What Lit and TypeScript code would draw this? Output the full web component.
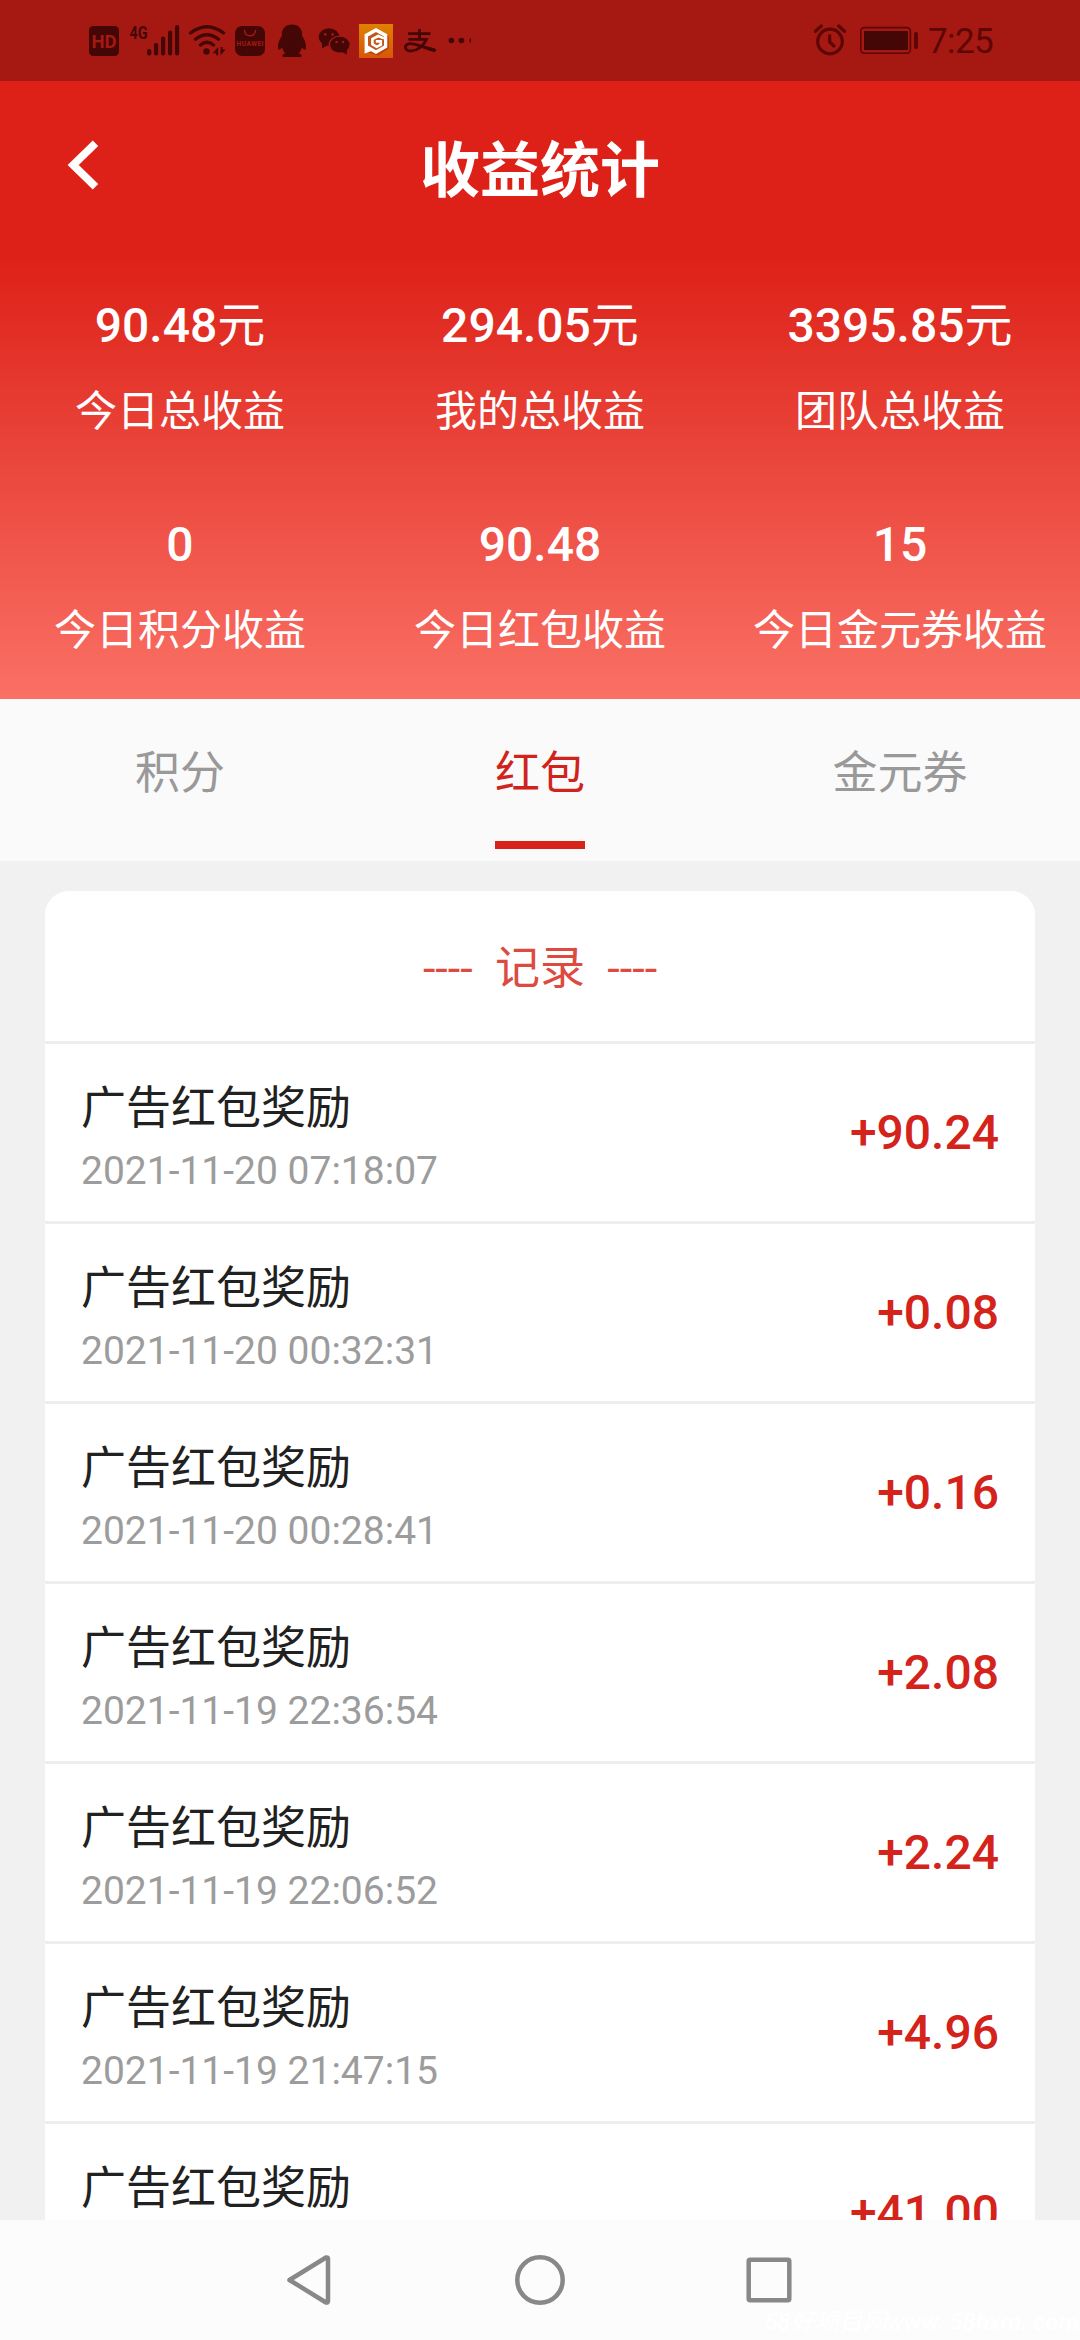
import { LitElement, html, css } from "lit";
import { customElement, property } from "lit/decorators.js";

const FONT = css`Roboto, "Noto Sans CJK SC", sans-serif`;

@customElement("status-bar")
class StatusBar extends LitElement {
  static styles = css`
    :host {
      display: flex;
      justify-content: space-between;
      height: 81px;
      padding: 0 89px 0 88px;
      box-sizing: border-box;
      background: #a51912;
      color: #450706;
      font-family: ${FONT};
    }
    .group { display: flex; }
    svg { display: block; fill: currentColor; font-family: ${FONT}; }
    .line { fill: none; stroke: currentColor; stroke-linecap: round; }
    .cut { fill: #a51912; }
    .cutline { fill: none; stroke: #a51912; stroke-linecap: round; }
    .right { color: #5c0605; }
    .time { font-size: 35px; line-height: 83px; width: 63px; margin-left: 9px; white-space: nowrap; letter-spacing: -0.6px; }
  `;
  render() {
    return html`
      <div class="group">
        <svg width="40" height="81" viewBox="88 0 40 81">
          <rect x="89" y="26" width="30" height="30" rx="4.5"></rect>
          <text class="cut" x="104" y="47.6" font-size="18.5" font-weight="700" text-anchor="middle" textLength="25">HD</text>
        </svg>
        <svg width="58" height="81" viewBox="128 0 58 81">
          <text x="129.5" y="38.6" font-size="19" font-weight="700" textLength="18" lengthAdjust="spacingAndGlyphs">4G</text>
          <rect x="147" y="49" width="4.4" height="6.5" rx="2"></rect>
          <rect x="154" y="43" width="4.2" height="12.5" rx="2"></rect>
          <rect x="161" y="36.5" width="4.2" height="19" rx="2"></rect>
          <rect x="168" y="30.5" width="4.2" height="25" rx="2"></rect>
          <rect x="175" y="25" width="4.2" height="30.5" rx="2"></rect>
        </svg>
        <svg width="48" height="81" viewBox="186 0 48 81">
          <g class="line" stroke-width="3.4">
            <path d="M190.5 33 Q207 20.5 223.5 33"></path>
            <path d="M195.5 39.3 Q207 30 218.5 39.3"></path>
            <path d="M200.5 45 Q207 39.5 213.5 45"></path>
          </g>
          <circle cx="206.5" cy="51.5" r="3.2"></circle>
          <path d="M218.2 47 V55.3 H216.2 V53.2 H212.6 Z M220.6 47 H222.6 V49.6 H225.6 L220.6 55.3 Z"></path>
        </svg>
        <svg width="40" height="81" viewBox="234 0 40 81">
          <rect x="235" y="26" width="30" height="30" rx="7"></rect>
          <path class="cutline" stroke-width="1.4" d="M244.5 30.5 C245 37.5 255 37.5 255.5 30.5"></path>
          <text class="cut" x="250" y="45.6" font-size="6.6" font-weight="700" text-anchor="middle" textLength="27">HUAWEI</text>
        </svg>
        <svg width="40" height="81" viewBox="274 0 40 81">
          <path d="M292 24.5 C285 24.5 281.5 29 281.8 36 C279 40 277.3 44.5 278.2 49.5 C279.5 50.5 281 48.5 282 47.2 C282.6 49.8 283.8 51.8 285.3 53.2 C282 54.3 281.3 56.8 284 57 H300 C302.7 56.8 302 54.3 298.7 53.2 C300.2 51.8 301.4 49.8 302 47.2 C303 48.5 304.5 50.5 305.8 49.5 C306.7 44.5 305 40 302.2 36 C302.5 29 299 24.5 292 24.5 Z"></path>
        </svg>
        <svg width="42" height="81" viewBox="314 0 42 81">
          <ellipse cx="329" cy="37" rx="10.3" ry="8.8"></ellipse>
          <path d="M322 43 L322 48.5 L328 45 Z"></path>
          <ellipse class="cut" cx="339.6" cy="44.5" rx="11" ry="9"></ellipse>
          <ellipse cx="339.8" cy="44.6" rx="9.7" ry="7.9"></ellipse>
          <path d="M341 51.5 L347 49.5 L346.8 54.5 Z"></path>
          <circle class="cut" cx="325.3" cy="34.4" r="1.3"></circle>
          <circle class="cut" cx="332.6" cy="34.4" r="1.3"></circle>
          <circle class="cut" cx="336.6" cy="42" r="1.2"></circle>
          <circle class="cut" cx="343" cy="42" r="1.2"></circle>
        </svg>
        <svg width="46" height="81" viewBox="356 0 46 81">
          <defs>
            <linearGradient id="gold" x1="0" y1="0" x2="0" y2="1">
              <stop offset="0" stop-color="#de8200"></stop>
              <stop offset="1" stop-color="#d8560a"></stop>
            </linearGradient>
          </defs>
          <rect x="359" y="24" width="34" height="34" fill="url(#gold)"></rect>
          <path d="M367 52 L387 34.5 L388.8 37 V48.6 L378 55.4 Z" fill="#b8420c"></path>
          <path d="M376 28 L387.3 34.3 V47.6 L376 54 L371 51.2 L364.6 53.4 V34.3 Z" fill="#fff"></path>
          <path d="M376 32 L384 36.6 V45.6 L376 50.2 L368 45.6 V36.6 Z" fill="#c2571b"></path>
          <path d="M384 38.4 L378.2 36 L372.4 39 V44.2 L376.6 46.8 L380.8 44.6 V41.4 H375.8" fill="none" stroke="#fff" stroke-width="2.6"></path>
        </svg>
        <svg width="42" height="81" viewBox="402 0 42 81">
          <path d="M408 32.2 H430.5 V35 H408 Z M418 29 H421 V40 H418 Z"></path>
          <path class="line" stroke-width="2.8" stroke-linecap="butt" d="M409.5 39.4 H426.5 C423.5 46.5 416.5 51.2 410.5 51 C404.5 50.7 403.8 45.2 408.5 43.8 C413.5 42.4 421 47.2 434.8 50"></path>
          <path d="M422 45.2 L435 48.5 V52.2 C430 51.4 424.5 49 420 47 Z"></path>
        </svg>
        <svg width="28" height="81" viewBox="444 0 28 81">
          <circle cx="451.4" cy="40.5" r="2.8"></circle>
          <circle cx="461.4" cy="40.5" r="2.8"></circle>
          <path d="M471 38 A2.8 2.8 0 0 0 471 43 Z"></path>
        </svg>
      </div>
      <div class="group right">
        <svg width="46" height="81" viewBox="812 0 46 81">
          <circle class="line" cx="829" cy="41.5" r="12.3" stroke-width="3.2"></circle>
          <path class="line" stroke-width="3.2" d="M828.7 35.5 V42 L833 46"></path>
          <path class="line" stroke-width="3.2" stroke-linecap="butt" d="M814.5 31.3 L820.3 26 M843.5 31.3 L837.7 26"></path>
        </svg>
        <svg width="60" height="81" viewBox="858 0 60 81">
          <rect class="line" x="859.8" y="27.6" width="49.6" height="25.6" rx="3.5" stroke-width="1.6"></rect>
          <rect x="863" y="31" width="44" height="19" fill="#450706"></rect>
          <rect x="913" y="32" width="4" height="17" rx="1.8"></rect>
        </svg>
        <span class="time">7:25</span>
      </div>`;
  }
}

@customElement("stat-cell")
class StatCell extends LitElement {
  @property() value = "";
  @property() unit = "";
  @property() label = "";
  static styles = css`
    :host {
      display: flex;
      flex-direction: column;
      align-items: center;
      color: #fff;
      font-family: ${FONT};
      white-space: nowrap;
    }
    .value { font-size: 48px; font-weight: 500; line-height: 66px; height: 66px; }
    .unit { font-weight: 400; }
    .label { margin-top: 23px; font-size: 42px; line-height: 60px; }
  `;
  render() {
    return html`
      <div class="value">${this.value}<span class="unit">${this.unit}</span></div>
      <div class="label">${this.label}</div>`;
  }
}

@customElement("record-row")
class RecordRow extends LitElement {
  @property() name = "";
  @property() date = "";
  @property() amount = "";
  static styles = css`
    :host {
      display: flex;
      align-items: center;
      justify-content: space-between;
      box-sizing: border-box;
      height: 180px;
      flex: none;
      padding: 0 36px;
      border-top: 3px solid #eee;
      font-family: ${FONT};
    }
    .info { padding-top: 10px; }
    .name { font-size: 45px; line-height: 66px; color: #212121; }
    .date { font-size: 39px; line-height: 58px; color: #9c9c9c; }
    .amount { font-size: 48px; font-weight: 500; color: #d4231b; }
  `;
  render() {
    return html`
      <div class="info">
        <div class="name">${this.name}</div>
        <div class="date">${this.date}</div>
      </div>
      <div class="amount">${this.amount}</div>`;
  }
}

@customElement("app-root")
class AppRoot extends LitElement {
  private stats = [
    ["90.48", "元", "今日总收益"],
    ["294.05", "元", "我的总收益"],
    ["3395.85", "元", "团队总收益"],
    ["0", "", "今日积分收益"],
    ["90.48", "", "今日红包收益"],
    ["15", "", "今日金元券收益"],
  ];
  private tabs = ["积分", "红包", "金元券"];
  private active = 1;
  private records = [
    ["2021-11-20 07:18:07", "+90.24"],
    ["2021-11-20 00:32:31", "+0.08"],
    ["2021-11-20 00:28:41", "+0.16"],
    ["2021-11-19 22:36:54", "+2.08"],
    ["2021-11-19 22:06:52", "+2.24"],
    ["2021-11-19 21:47:15", "+4.96"],
    ["", "+41.00"],
  ];
  static styles = css`
    :host {
      display: flex;
      flex-direction: column;
      width: 1080px;
      height: 2340px;
      overflow: hidden;
      background: #f1f1f1;
      font-family: ${FONT};
    }
    .hero {
      flex: none;
      height: 618px;
      box-sizing: border-box;
      background: linear-gradient(#dd2118 0, #dd2118 174px, #fa7065 618px);
    }
    .titlebar {
      display: grid;
      grid-template-columns: 180px 1fr 180px;
      align-items: center;
      height: 168px;
    }
    .back { display: block; margin-left: 64px; }
    .title { text-align: center; color: #fff; font-size: 60px; font-weight: 700; line-height: 90px; padding-top: 13px; }
    .stats {
      display: grid;
      grid-template-columns: repeat(3, 360px);
      grid-auto-rows: 219px;
      padding-top: 44px;
    }
    .tabs {
      flex: none;
      display: grid;
      grid-template-columns: repeat(3, 1fr);
      height: 162px;
      background: #fafafa;
    }
    .tab {
      display: flex;
      flex-direction: column;
      align-items: center;
      justify-content: space-between;
      box-sizing: border-box;
      padding: 42px 0 12px;
      font-size: 45px;
      line-height: 66px;
      color: #999;
    }
    .on { color: #d0231b; }
    .bar { width: 90px; height: 8px; }
    .on .bar { background: #d8231b; }
    .body { flex: 1; min-height: 0; overflow: hidden; padding: 30px 45px 0; }
    .card { display: flex; flex-direction: column; background: #fff; border-radius: 24px 24px 0 0; }
    .head {
      height: 150px;
      box-sizing: border-box;
      padding-top: 3px;
      line-height: 150px;
      text-align: center;
      white-space: pre;
      color: #dc4a40;
      font-size: 45px;
    }
    .nav {
      flex: none;
      position: relative;
      height: 120px;
      background: #fcfcfc;
      display: flex;
      justify-content: center;
      align-items: center;
      gap: 169px;
    }
    .nav svg { fill: none; stroke: #888; stroke-width: 4.5; stroke-linejoin: round; }
    .mark {
      position: absolute;
      right: 1px;
      bottom: 3px;
      color: #fff;
      font-size: 24px;
      line-height: 30px;
      font-style: italic;
      font-weight: 500;
      white-space: nowrap;
    }
  `;
  render() {
    return html`
      <status-bar></status-bar>
      <section class="hero">
        <div class="titlebar">
          <svg class="back" width="38" height="52" viewBox="64 139 38 52" fill="none" stroke="#fff" stroke-width="7.8">
            <path d="M95.5 143.2 L73.2 165 L95.5 186.8"></path>
          </svg>
          <div class="title">收益统计</div>
        </div>
        <div class="stats">
          ${this.stats.map(([v, u, l]) => html`<stat-cell .value=${v} .unit=${u} .label=${l}></stat-cell>`)}
        </div>
      </section>
      <nav class="tabs">
        ${this.tabs.map((t, i) => html`
          <div class="tab ${i === this.active ? "on" : ""}"><span>${t}</span><span class="bar"></span></div>`)}
      </nav>
      <main class="body">
        <div class="card">
          <div class="head">----  记录  ----</div>
          ${this.records.map(([d, a]) => html`<record-row .name=${"广告红包奖励"} .date=${d || "\u00a0"} .amount=${a}></record-row>`)}
        </div>
      </main>
      <footer class="nav">
        <svg width="60" height="60" viewBox="281 2250 60 60">
          <path d="M289.5 2280 L326 2257.5 Q328 2257 328 2259 V2301 Q328 2303 326 2302.5 Z"></path>
        </svg>
        <svg width="60" height="60" viewBox="510 2250 60 60"><circle cx="540" cy="2280" r="22.7"></circle></svg>
        <svg width="60" height="60" viewBox="739 2250 60 60"><rect x="748.7" y="2259.7" width="40.6" height="40.6" rx="1.5"></rect></svg>
        <span class="mark">58好项目网www. 58hxm. com</span>
      </footer>`;
  }
}
